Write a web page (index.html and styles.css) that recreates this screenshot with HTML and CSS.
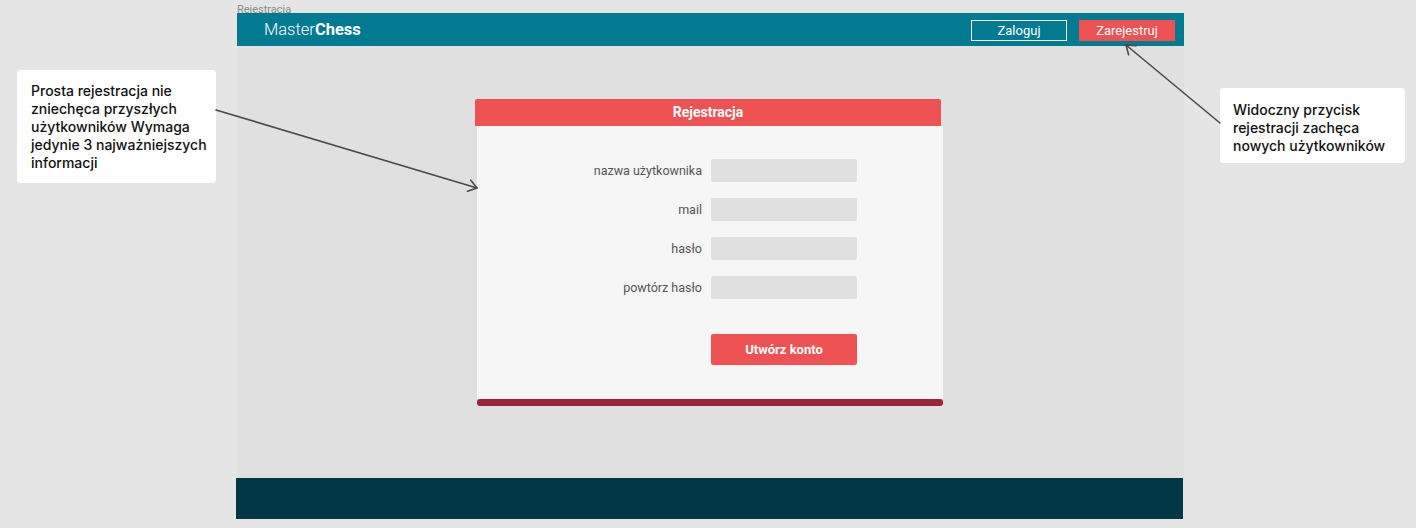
FILE: index.html
```html
<!DOCTYPE html>
<html lang="pl">
<head>
<meta charset="utf-8">
<title>Rejestracja</title>
<link rel="stylesheet" href="styles.css">
</head>
<body>
<div class="canvas">
  <div class="frame-label">Rejestracja</div>
  <div class="frame">
    <header class="topbar">
      <div class="logo"><span class="logo-light">Master</span><span class="logo-bold">Chess</span></div>
      <nav class="actions">
        <button class="btn btn-outline">Zaloguj</button>
        <button class="btn btn-red">Zarejestruj</button>
      </nav>
    </header>
    <main class="main">
      <section class="card">
        <div class="card-head">Rejestracja</div>
        <div class="card-body">
          <div class="form-grid">
            <label class="f-label">nazwa użytkownika</label><div class="f-input"></div>
            <label class="f-label">mail</label><div class="f-input"></div>
            <label class="f-label">hasło</label><div class="f-input"></div>
            <label class="f-label">powtórz hasło</label><div class="f-input"></div>
            <span></span><button class="submit">Utwórz konto</button>
          </div>
        </div>
        <div class="card-foot"></div>
      </section>
    </main>
    <footer class="footer"></footer>
  </div>

  <div class="note note-left">Prosta rejestracja nie zniechęca przyszłych użytkowników Wymaga jedynie 3 najważniejszych informacji</div>
  <div class="note note-right">Widoczny przycisk rejestracji zachęca nowych użytkowników</div>

  <svg class="arrows" width="1416" height="528" viewBox="0 0 1416 528">
    <g fill="none" stroke="#4a4a4a" stroke-width="1.6" stroke-linecap="round" stroke-linejoin="round">
      <path d="M216 110 L477 188"/>
      <path d="M470.8 180.2 L477 188 L467.5 191.2"/>
      <path d="M1220 123 L1126 45"/>
      <path d="M1128.6 54.7 L1126 45 L1136 45.8"/>
    </g>
  </svg>
</div>
</body>
</html>
```
FILE: styles.css
```css
* { box-sizing: border-box; }
html, body { margin: 0; padding: 0; }
body {
  background: #e5e5e5;
  font-family: Roboto, "Liberation Sans", Arial, sans-serif;
  width: 1416px;
  height: 528px;
  overflow: hidden;
}
.canvas {
  position: relative;
  width: 1416px;
  height: 528px;
}
.frame-label {
  position: absolute;
  left: 237px;
  top: 3px;
  font-size: 11px;
  line-height: 13px;
  color: #8a8a8a;
  z-index: 0;
}
.frame {
  position: absolute;
  left: 237px;
  top: 13px;
  width: 947px;
  height: 506px;
  display: flex;
  flex-direction: column;
  z-index: 1;
}
.topbar {
  height: 33px;
  background: #027a91;
  display: flex;
  align-items: center;
  justify-content: space-between;
  padding: 0 9px 0 27px;
}
.logo {
  color: #fff;
  font-size: 16.5px;
  line-height: 1;
  padding-top: 1px;
}
.logo-light { font-weight: 300; }
.logo-bold { font-weight: 700; }
.actions {
  display: flex;
  gap: 12px;
  padding-top: 1px;
}
.btn {
  width: 96px;
  height: 21px;
  font-family: Roboto, "Liberation Sans", Arial, sans-serif;
  font-size: 13px;
  color: #fff;
  padding: 0;
  cursor: pointer;
  line-height: 19px;
}
.btn-outline {
  background: transparent;
  border: 1.5px solid #fff;
}
.btn-red {
  background: #ee5253;
  border: 1.5px solid #ee5253;
}
.main {
  flex: 1;
  background: #e0e0e0;
  padding: 53px 0 0 238px;
}
.card {
  width: 468px;
}
.card-head {
  width: 466px;
  height: 27px;
  background: #ee5253;
  color: #fff;
  font-weight: 700;
  font-size: 14px;
  line-height: 27px;
  text-align: center;
  border-radius: 2px 2px 0 0;
}
.card-body {
  margin-left: 2px;
  width: 466px;
  height: 273px;
  background: #f6f6f6;
  padding-top: 33px;
}
.form-grid {
  display: grid;
  grid-template-columns: 225px 146px;
  column-gap: 9px;
  row-gap: 16px;
  align-items: center;
}
.f-label {
  text-align: right;
  font-size: 12.5px;
  color: #555;
  line-height: 23px;
}
.f-input {
  height: 23px;
  background: #e0e0e0;
  border-radius: 2px;
}
.submit {
  margin-top: 19px;
  height: 31px;
  background: #ee5253;
  border: none;
  border-radius: 2px;
  color: #fff;
  font-family: Roboto, "Liberation Sans", Arial, sans-serif;
  font-weight: 700;
  font-size: 13px;
  padding: 0;
}
.card-foot {
  margin-left: 2px;
  width: 466px;
  height: 7px;
  background: #9a2438;
  border-radius: 3px;
}
.footer {
  height: 41px;
  width: 947px;
  background: #003845;
  margin-left: -1px;
}
.note {
  position: absolute;
  background: #fff;
  border-radius: 4px;
  font-family: Inter, Roboto, sans-serif;
  font-weight: 500;
  font-size: 14px;
  line-height: 18px;
  color: #111;
  z-index: 2;
}
.note-left {
  left: 17px;
  top: 70px;
  width: 199px;
  height: 113px;
  padding: 12px 2px 0 14px;
}
.note-right {
  left: 1220px;
  top: 88px;
  width: 185px;
  height: 75px;
  padding: 13px 4px 0 13px;
}
.arrows {
  position: absolute;
  left: 0;
  top: 0;
  pointer-events: none;
  z-index: 3;
}
```
